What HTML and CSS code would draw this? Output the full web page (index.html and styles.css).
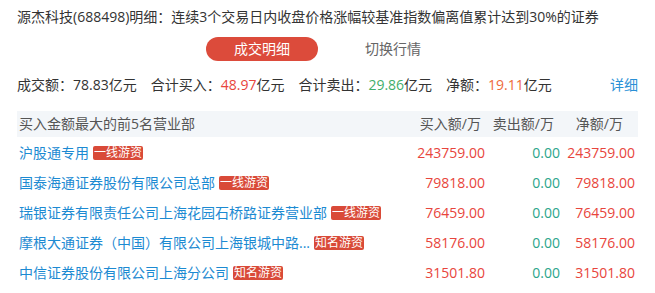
FILE: index.html
```html
<!DOCTYPE html>
<html lang="zh-CN">
<head>
<meta charset="utf-8">
<title>源杰科技明细</title>
<link rel="stylesheet" href="styles.css">
</head>
<body>
<div class="wrap">
  <div class="title">源杰科技(688498)明细：连续3个交易日内收盘价格涨幅较基准指数偏离值累计达到30%的证券</div>
  <div class="tabs">
    <div class="tab active">成交明细</div>
    <div class="tab">切换行情</div>
  </div>
  <div class="summary">
    <span class="item">成交额：78.83亿元</span>
    <span class="item">合计买入：<span class="red">48.97</span>亿元</span>
    <span class="item">合计卖出：<span class="green">29.86</span>亿元</span>
    <span class="item">净额：<span class="orange">19.11</span>亿元</span>
    <span class="more">详细</span>
  </div>
  <div class="table">
    <div class="row head">
      <div class="c-name">买入金额最大的前5名营业部</div>
      <div class="c-buy">买入额/万</div>
      <div class="c-sell">卖出额/万</div>
      <div class="c-net">净额/万</div>
    </div>
    <div class="row">
      <div class="c-name"><span class="name">沪股通专用</span><span class="tag">一线游资</span></div>
      <div class="c-buy red">243759.00</div>
      <div class="c-sell tgreen">0.00</div>
      <div class="c-net red">243759.00</div>
    </div>
    <div class="row">
      <div class="c-name"><span class="name">国泰海通证券股份有限公司总部</span><span class="tag">一线游资</span></div>
      <div class="c-buy red">79818.00</div>
      <div class="c-sell tgreen">0.00</div>
      <div class="c-net red">79818.00</div>
    </div>
    <div class="row">
      <div class="c-name"><span class="name">瑞银证券有限责任公司上海花园石桥路证券营业部</span><span class="tag">一线游资</span></div>
      <div class="c-buy red">76459.00</div>
      <div class="c-sell tgreen">0.00</div>
      <div class="c-net red">76459.00</div>
    </div>
    <div class="row">
      <div class="c-name"><span class="name">摩根大通证券（中国）有限公司上海银城中路...</span><span class="tag">知名游资</span></div>
      <div class="c-buy red">58176.00</div>
      <div class="c-sell tgreen">0.00</div>
      <div class="c-net red">58176.00</div>
    </div>
    <div class="row">
      <div class="c-name"><span class="name">中信证券股份有限公司上海分公司</span><span class="tag">知名游资</span></div>
      <div class="c-buy red">31501.80</div>
      <div class="c-sell tgreen">0.00</div>
      <div class="c-net red">31501.80</div>
    </div>
  </div>
</div>
</body>
</html>
```
FILE: styles.css
```css
html, body {
  margin: 0;
  padding: 0;
  background: #fff;
}
body {
  font-family: "Open Sans", "Noto Sans CJK SC", sans-serif;
  font-size: 14px;
  color: #333;
}
.wrap {
  padding: 7px 17px 0 17px;
}
.title {
  line-height: 20px;
  height: 20px;
  white-space: nowrap;
  color: #333;
}
.tabs {
  display: flex;
  justify-content: center;
  gap: 19px;
  margin-top: 10px;
}
.tab {
  width: 112px;
  height: 24px;
  line-height: 24px;
  border-radius: 12px;
  text-align: center;
  color: #666;
}
.tab.active {
  background: #dc4b3b;
  color: #fff;
}
.summary {
  display: flex;
  align-items: center;
  margin-top: 14px;
  height: 20px;
  line-height: 20px;
  white-space: nowrap;
}
.summary .item {
  margin-right: 14px;
}
.summary .more {
  margin-left: auto;
  color: #2a90d6;
}
.red { color: #e8453c; }
.green { color: #3fae6b; }
.orange { color: #ee6a3a; }
.tgreen { color: #2ba58a; }
.table {
  margin-top: 16px;
}
.row {
  display: grid;
  grid-template-columns: 1fr 90px 75px 75px;
  height: 30px;
  line-height: 30px;
  align-items: center;
  white-space: nowrap;
}
.row.head {
  height: 26px;
  line-height: 26px;
  background: #f3f6f9;
  color: #555;
  margin-bottom: 1px;
}
.c-name {
  display: flex;
  align-items: center;
  padding-left: 2px;
}
.c-buy, .c-sell, .c-net {
  text-align: right;
  padding-right: 3px;
}
.head .c-buy { padding-right: 7px; }
.head .c-sell { padding-right: 9px; }
.head .c-net { padding-right: 15px; }
.name {
  color: #1c8ad2;
}
.tag {
  margin-left: 4px;
  background: #d94a38;
  color: #fff;
  font-size: 12px;
  line-height: 14px;
  height: 14px;
  padding: 0 1px;
  border-radius: 2px;
}
```
